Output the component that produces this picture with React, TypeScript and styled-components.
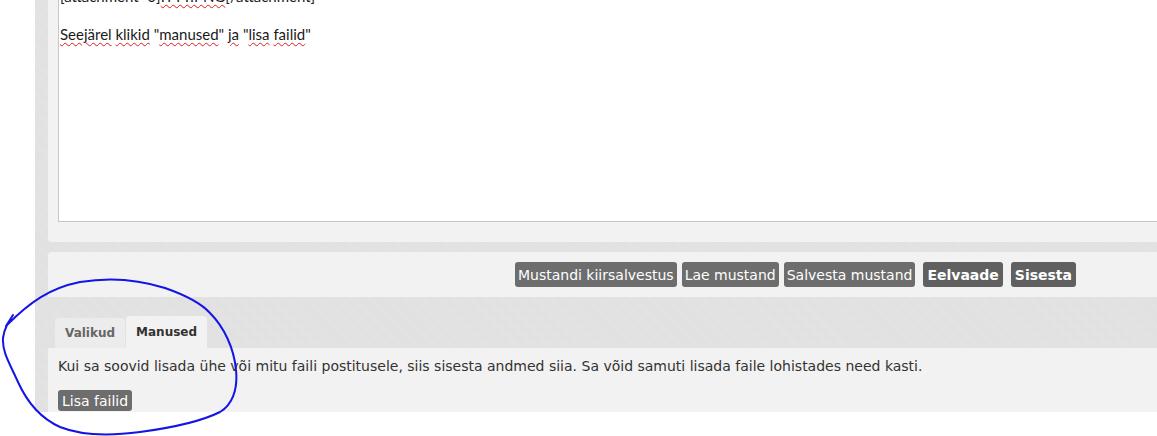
import React from 'react';
import styled, { createGlobalStyle } from 'styled-components';

const GlobalStyle = createGlobalStyle`
    html, body {
        margin: 0;
        padding: 0;
        background: #ffffff;
        overflow: hidden;
    }
`

const texture = `
    background-color: #e0e0e0;
    background-image: repeating-linear-gradient(45deg, rgba(255,255,255,0.12) 0 1px, transparent 1px 2px);
`

const Stage = styled.div`
    position: relative;
    width: 1157px;
    height: 436px;
    overflow: hidden;
`

const Page = styled.div`
    ${texture}
    margin-left: 35px;
    width: 1122px;
    height: 412px;
    padding-left: 13px;
    box-sizing: border-box;
    display: flex;
    flex-direction: column;
`

const EditorPanel = styled.div`
    background: #f2f2f2;
    border-radius: 0 0 0 4px;
    height: 242px;
    padding: 0 0 0 10px;
    box-sizing: border-box;
`

const Editor = styled.div`
    height: 222px;
    background: #ffffff;
    border: 1px solid #c6c6c6;
    border-top: none;
    border-right: none;
    box-sizing: border-box;
    overflow: hidden;
    font-family: Lato, "Open Sans", sans-serif;
    font-size: 15px;
    line-height: 19px;
    color: #1a1a1a;
    padding-left: 1px;
`

const EditorText = styled.div`
    margin-top: -13px;
`

const Misspelled = styled.span`
    text-decoration: underline wavy #e01b1b;
    text-decoration-thickness: 1px;
    text-underline-offset: 2px;
`

const ButtonBar = styled.div`
    background: #f2f2f2;
    margin-top: 10px;
    height: 45px;
    border-radius: 4px 0 0 0;
    display: flex;
    align-items: center;
    justify-content: flex-end;
    padding-right: 81px;
`

const Button = styled.span<{ $primary?: boolean }>`
    display: inline-flex;
    align-items: center;
    height: 25px;
    box-sizing: border-box;
    padding: 0 ${p => (p.$primary ? '4px' : '3px')};
    margin-left: ${p => (p.$primary ? '8px' : '5px')};
    background: ${p => (p.$primary ? '#606060' : '#6d6d6d')};
    color: #ffffff;
    border-radius: 3px;
    font-family: "DejaVu Sans", Verdana, sans-serif;
    font-size: 14px;
    font-weight: ${p => (p.$primary ? 700 : 400)};
    white-space: nowrap;
`

const TabStrip = styled.div`
    display: flex;
    align-items: flex-end;
    padding: 19px 0 0 7px;
    height: 51px;
    box-sizing: border-box;
`

const Tab = styled.span<{ $active?: boolean }>`
    display: inline-flex;
    align-items: center;
    height: ${p => (p.$active ? '32px' : '30px')};
    padding: 0 10px;
    margin-right: 1px;
    background: ${p => (p.$active ? '#f2f2f2' : '#ececec')};
    color: ${p => (p.$active ? '#333333' : '#666666')};
    border-radius: 4px 4px 0 0;
    font-family: "DejaVu Sans", Verdana, sans-serif;
    font-size: 12px;
    font-weight: 700;
`

const TabBody = styled.div`
    background: #f2f2f2;
    flex: 1;
    padding: 8px 10px 0 10px;
    font-family: "DejaVu Sans", Verdana, sans-serif;
    font-size: 14px;
    color: #333333;
`

const Hint = styled.div`
    height: 34px;
    line-height: 20px;
`

const SmallButton = styled(Button)`
    margin-left: 0;
    height: 21px;
    padding: 0 4px;
`

const Scribble = styled.svg`
    position: absolute;
    left: 0;
    top: 0;
    pointer-events: none;
`

export default function App() {
    return (
        <Stage>
            <GlobalStyle />
            <Page>
                <EditorPanel>
                    <Editor>
                        <EditorText>
                            <div>[attachment=0]<Misspelled>ITTT.PNG</Misspelled>[/attachment]</div>
                            <div>&nbsp;</div>
                            <div>
                                <Misspelled>Seejärel</Misspelled> <Misspelled>klikid</Misspelled> "<Misspelled>manused</Misspelled>" <Misspelled>ja</Misspelled> "<Misspelled>lisa</Misspelled> <Misspelled>failid</Misspelled>"
                            </div>
                        </EditorText>
                    </Editor>
                </EditorPanel>
                <ButtonBar>
                    <Button>Mustandi kiirsalvestus</Button>
                    <Button>Lae mustand</Button>
                    <Button>Salvesta mustand</Button>
                    <Button $primary>Eelvaade</Button>
                    <Button $primary>Sisesta</Button>
                </ButtonBar>
                <TabStrip>
                    <Tab>Valikud</Tab>
                    <Tab $active>Manused</Tab>
                </TabStrip>
                <TabBody>
                    <Hint>Kui sa soovid lisada ühe või mitu faili postitusele, siis sisesta andmed siia. Sa võid samuti lisada faile lohistades need kasti.</Hint>
                    <SmallButton>Lisa failid</SmallButton>
                </TabBody>
            </Page>
            <Scribble width="1157" height="436" viewBox="0 0 1157 436">
                <path
                    d="M13 315 L6 326 M7 325 C30 302 50 288 80 282 C110 277 140 280 165 288 C185 295 200 302 210 313 C224 327 234 348 236 370 C238 390 232 405 220 412 C200 422 170 428 140 432 C110 436 80 435 60 427 C40 418 27 402 18 382 C10 364 2 352 3 338 C4 331 6 327 7 325"
                    fill="none"
                    stroke="#1414e6"
                    strokeWidth="2"
                    strokeLinecap="round"
                    strokeLinejoin="round"
                />
            </Scribble>
        </Stage>
    );
}
